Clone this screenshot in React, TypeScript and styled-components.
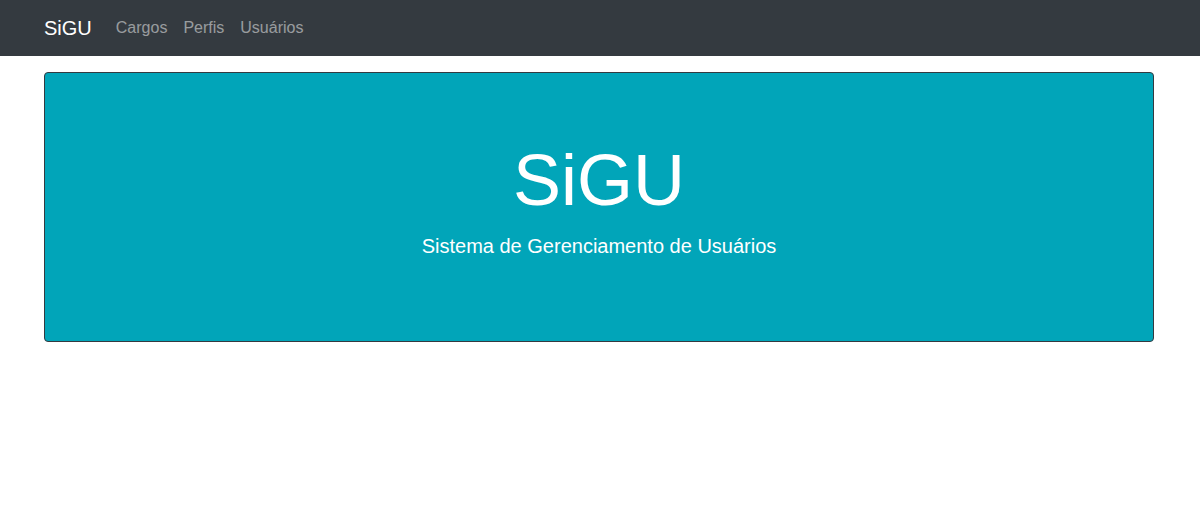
import React from "react";
import styled, { createGlobalStyle } from "styled-components";

const GlobalStyle = createGlobalStyle`
  * { box-sizing: border-box; }
  body {
    margin: 0;
    background: #ffffff;
    font-family: "Liberation Sans", Arial, Helvetica, sans-serif;
    font-size: 16px;
    line-height: 1.5;
    color: #212529;
  }
`;

const Navbar = styled.nav`
  background: #343a40;
  padding: 8px 16px;
`;

const NavContainer = styled.div`
  max-width: 1140px;
  margin: 0 auto;
  padding: 0 16px 0 14px;
  display: flex;
  align-items: center;
`;

const Brand = styled.a`
  color: #ffffff;
  font-size: 20px;
  line-height: 30px;
  padding: 5px 0;
  margin-right: 16px;
  text-decoration: none;
`;

const NavList = styled.div`
  display: flex;
`;

const NavLink = styled.a`
  color: rgba(255, 255, 255, 0.5);
  padding: 8px;
  font-size: 16px;
  line-height: 24px;
  text-decoration: none;
`;

const Container = styled.main`
  max-width: 1140px;
  margin: 16px auto 0;
  padding: 0 16px 0 14px;
`;

const Jumbotron = styled.section`
  background: #01a5b9;
  border: 1px solid #343a40;
  border-radius: 4px;
  padding: 64px 32px;
  text-align: center;
  color: #ffffff;
`;

const Title = styled.h1`
  margin: 0 0 8px;
  font-size: 72px;
  font-weight: 300;
  line-height: 1.2;
`;

const Lead = styled.p`
  margin: 0 0 16px;
  font-size: 20px;
  font-weight: 300;
  line-height: 1.5;
`;

export default function App() {
  return (
    <>
      <GlobalStyle />
      <Navbar>
        <NavContainer>
          <Brand href="#">SiGU</Brand>
          <NavList>
            <NavLink href="#">Cargos</NavLink>
            <NavLink href="#">Perfis</NavLink>
            <NavLink href="#">Usuários</NavLink>
          </NavList>
        </NavContainer>
      </Navbar>
      <Container>
        <Jumbotron>
          <Title>SiGU</Title>
          <Lead>Sistema de Gerenciamento de Usuários</Lead>
        </Jumbotron>
      </Container>
    </>
  );
}
